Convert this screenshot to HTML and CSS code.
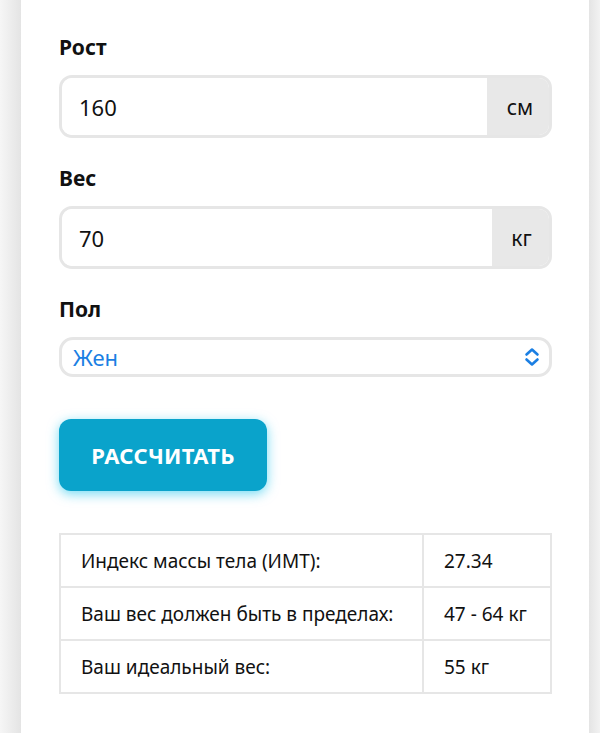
FILE: index.html
```html
<!DOCTYPE html>
<html lang="ru">
<head>
<meta charset="utf-8">
<title>Калькулятор ИМТ</title>
<link rel="stylesheet" href="styles.css">
</head>
<body>
<div class="page">
  <main class="card">
    <div class="field">
      <label class="label">Рост</label>
      <div class="input-group">
        <div class="input">160</div>
        <div class="addon">см</div>
      </div>
    </div>
    <div class="field">
      <label class="label">Вес</label>
      <div class="input-group">
        <div class="input">70</div>
        <div class="addon addon-kg">кг</div>
      </div>
    </div>
    <div class="field">
      <label class="label">Пол</label>
      <div class="select">
        <span class="select-value">Жен</span>
        <svg class="chevrons" width="16" height="20" viewBox="0 0 16 20" aria-hidden="true">
          <path d="M2.5 7.5 L8 2.5 L13.5 7.5" fill="none" stroke="#1b7fe3" stroke-width="2.6" stroke-linecap="round" stroke-linejoin="round"/>
          <path d="M2.5 12.5 L8 17.5 L13.5 12.5" fill="none" stroke="#1b7fe3" stroke-width="2.6" stroke-linecap="round" stroke-linejoin="round"/>
        </svg>
      </div>
    </div>
    <button class="btn">РАССЧИТАТЬ</button>
    <table class="results">
      <tr><td class="name">Индекс массы тела (ИМТ):</td><td class="val">27.34</td></tr>
      <tr><td class="name">Ваш вес должен быть в пределах:</td><td class="val">47 - 64 кг</td></tr>
      <tr><td class="name">Ваш идеальный вес:</td><td class="val">55 кг</td></tr>
    </table>
  </main>
</div>
</body>
</html>
```
FILE: styles.css
```css
html, body {
  margin: 0;
  padding: 0;
}
body {
  background: linear-gradient(to right, #f6f6f6 0, #e4e4e4 21px, #e4e4e4 589px, #f2f2f2 600px);
  font-family: "Noto Sans", "Open Sans", sans-serif;
  color: #111;
  height: 733px;
  overflow: hidden;
}
.page {
  display: flex;
  height: 733px;
}
.card {
  width: 568px;
  margin-left: 21px;
  background: #fff;
  padding: 35px 37px 0 38px;
  box-sizing: border-box;
}
.field {
  margin-bottom: 28px;
}
.label {
  display: block;
  font-size: 21px;
  font-weight: 700;
  line-height: 24px;
  margin-bottom: 16px;
}
.input-group {
  display: flex;
  height: 63px;
  border: 3px solid #e6e6e6;
  border-radius: 13px;
  box-sizing: border-box;
  overflow: hidden;
}
.input {
  flex: 1;
  display: flex;
  align-items: center;
  padding-left: 17px;
  font-size: 22px;
  background: #fff;
}
.addon {
  width: 62px;
  background: #e8e8e8;
  display: flex;
  align-items: center;
  justify-content: center;
  font-size: 21px;
  padding-left: 4px;
  box-sizing: border-box;
}
.addon-kg {
  width: 57px;
  padding-left: 2px;
}
.select {
  height: 40px;
  border: 3px solid #e6e6e6;
  border-radius: 14px;
  box-sizing: border-box;
  display: flex;
  align-items: center;
  justify-content: space-between;
  padding: 0 9px 0 11px;
}
.select-value {
  color: #1b7fe3;
  font-size: 22px;
}
.chevrons {
  display: block;
}
.btn {
  display: block;
  margin-top: 42px;
  width: 208px;
  height: 72px;
  border: none;
  border-radius: 12px;
  background: #0aa3cb;
  color: #fff;
  font-family: "Noto Sans", "Open Sans", sans-serif;
  font-size: 22px;
  font-weight: 700;
  letter-spacing: 0.3px;
  box-shadow: 0 3px 12px rgba(0, 190, 235, 0.55);
  padding: 0;
}
.results {
  margin-top: 42px;
  width: 493px;
  border-collapse: collapse;
  font-size: 19px;
}
.results td {
  border: 2px solid #e6e6e6;
  height: 53px;
  padding: 0 0 0 20px;
  box-sizing: border-box;
}
.results .name {
  width: 363px;
}
.results .val {
  padding-left: 20px;
}
```
